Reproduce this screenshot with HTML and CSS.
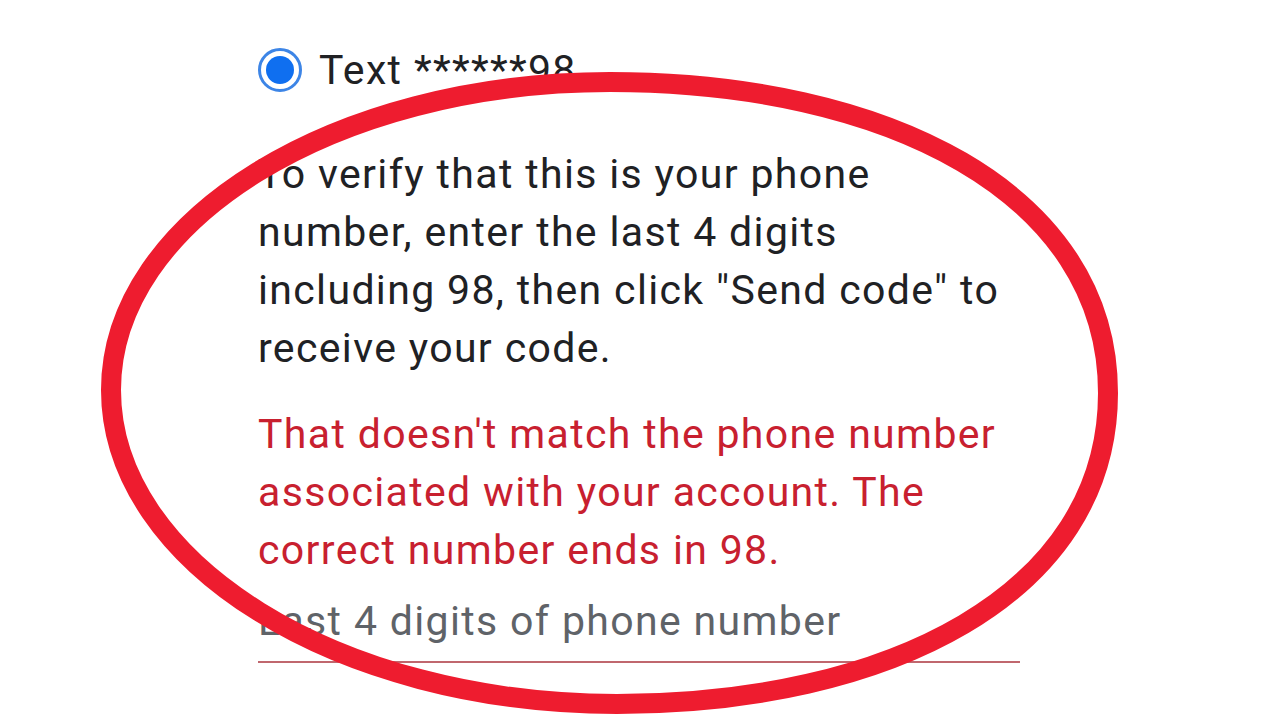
FILE: index.html
```html
<!DOCTYPE html>
<html lang="en">
<head>
<meta charset="utf-8">
<title>Verify phone</title>
<link rel="stylesheet" href="styles.css">
</head>
<body>
<div class="page">
  <div class="content">
    <div class="option">
      <span class="radio"><span class="dot"></span></span>
      <span class="option-label">Text ******98</span>
    </div>
    <p class="info">To verify that this is your phone<br>number, enter the last 4 digits<br>including 98, then click "Send code" to<br>receive your code.</p>
    <p class="error">That doesn't match the phone number<br>associated with your account. The<br>correct number ends in 98.</p>
    <div class="field"><span class="placeholder">Last 4 digits of phone number</span></div>
    <p class="more">I have a code</p>
  </div>
  <svg class="circle" width="1280" height="720" viewBox="0 0 1280 720">
    <path d="M610,82 C884,82 1108,191 1108,393 C1108,595 887,704 617,704 C338,704 111,563 111,390 C111,220 334,82 610,82 Z" fill="none" stroke="#ee1c2f" stroke-width="20"/>
  </svg>
</div>
</body>
</html>
```

FILE: styles.css
```css
html, body {
  margin: 0;
  padding: 0;
  background: #ffffff;
}
.page {
  position: relative;
  width: 1280px;
  height: 720px;
  overflow: hidden;
  background: #ffffff;
  font-family: Roboto, "Noto Sans", sans-serif;
}
.content {
  padding-left: 258px;
  padding-top: 41px;
}
.option {
  display: flex;
  align-items: center;
  gap: 17px;
  height: 58px;
}
.radio {
  width: 38px;
  height: 38px;
  border: 3px solid #3d85e6;
  border-radius: 50%;
  display: flex;
  align-items: center;
  justify-content: center;
  box-sizing: content-box;
}
.dot {
  width: 28px;
  height: 28px;
  border-radius: 50%;
  background: #0f6ff0;
}
.option-label,
.info,
.error,
.placeholder,
.more {
  font-size: 41px;
  line-height: 58px;
  letter-spacing: 1.35px;
  white-space: nowrap;
}
.option-label {
  color: #202124;
}
.info {
  margin: 46px 0 0 0;
  color: #202124;
}
.error {
  margin: 28px 0 0 0;
  color: #c8202f;
}
.field {
  margin-top: 13px;
  width: 762px;
  padding-bottom: 11px;
  border-bottom: 2px solid #c0676e;
}
.placeholder {
  display: block;
  color: #5f6368;
}
.more {
  margin: 45px 0 0 0;
  color: #5f6368;
}
.circle {
  position: absolute;
  left: 0;
  top: 0;
  pointer-events: none;
}
```
